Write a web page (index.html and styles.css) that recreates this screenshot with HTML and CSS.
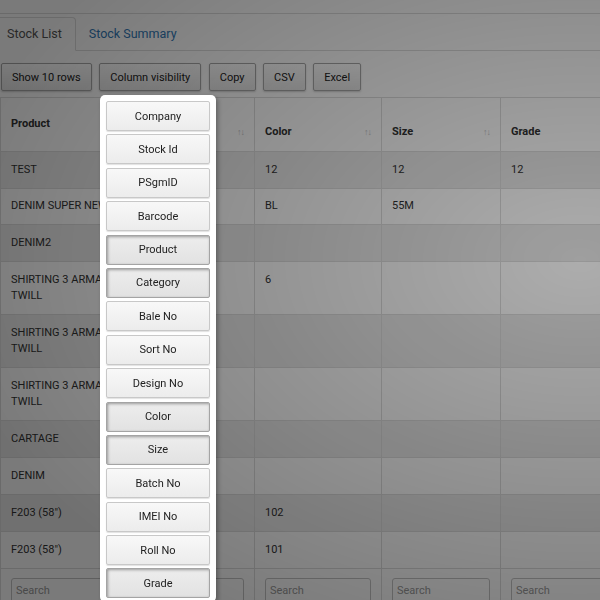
FILE: index.html
```html
<!DOCTYPE html>
<html>
<head>
<meta charset="utf-8">
<link rel="stylesheet" href="styles.css">
</head>
<body>
<div class="topbar"></div>
<ul class="tabs">
  <li class="tab active">Stock List</li>
  <li class="tab"><a class="tab-link" href="#">Stock Summary</a></li>
</ul>
<div class="toolbar">
  <button class="dt-btn">Show 10 rows</button>
  <button class="dt-btn">Column visibility</button>
  <button class="dt-btn">Copy</button>
  <button class="dt-btn">CSV</button>
  <button class="dt-btn">Excel</button>
</div>
<table class="grid">
  <colgroup>
    <col class="c-product"><col class="c-category"><col class="c-color"><col class="c-size"><col class="c-grade">
  </colgroup>
  <thead>
    <tr>
      <th class="th-product">Product</th>
      <th><div class="th-inner"><span>Category</span><span class="sort">↑↓</span></div></th>
      <th><div class="th-inner"><span>Color</span><span class="sort">↑↓</span></div></th>
      <th><div class="th-inner"><span>Size</span><span class="sort">↑↓</span></div></th>
      <th><div class="th-inner"><span>Grade</span></div></th>
    </tr>
  </thead>
  <tbody>
    <tr class="odd"><td>TEST</td><td>TEST</td><td>12</td><td>12</td><td>12</td></tr>
    <tr><td>DENIM SUPER NEW</td><td></td><td>BL</td><td>55M</td><td></td></tr>
    <tr class="odd"><td>DENIM2</td><td></td><td></td><td></td><td></td></tr>
    <tr><td>SHIRTING 3 ARMANI TWILL</td><td></td><td>6</td><td></td><td></td></tr>
    <tr class="odd"><td>SHIRTING 3 ARMANI TWILL</td><td></td><td></td><td></td><td></td></tr>
    <tr><td>SHIRTING 3 ARMANI TWILL</td><td></td><td></td><td></td><td></td></tr>
    <tr class="odd"><td>CARTAGE</td><td></td><td></td><td></td><td></td></tr>
    <tr><td>DENIM</td><td></td><td></td><td></td><td></td></tr>
    <tr class="odd"><td>F203 (58")</td><td></td><td>102</td><td></td><td></td></tr>
    <tr><td>F203 (58")</td><td></td><td>101</td><td></td><td></td></tr>
  </tbody>
  <tfoot>
    <tr>
      <td><input class="search" placeholder="Search"></td>
      <td><input class="search" placeholder="Search"></td>
      <td><input class="search" placeholder="Search"></td>
      <td><input class="search" placeholder="Search"></td>
      <td><input class="search" placeholder="Search"></td>
    </tr>
  </tfoot>
</table>
<div class="backdrop"></div>
<div class="collection">
  <button class="col-btn">Company</button>
  <button class="col-btn">Stock Id</button>
  <button class="col-btn">PSgmID</button>
  <button class="col-btn">Barcode</button>
  <button class="col-btn active">Product</button>
  <button class="col-btn active">Category</button>
  <button class="col-btn">Bale No</button>
  <button class="col-btn">Sort No</button>
  <button class="col-btn">Design No</button>
  <button class="col-btn active">Color</button>
  <button class="col-btn active">Size</button>
  <button class="col-btn">Batch No</button>
  <button class="col-btn">IMEI No</button>
  <button class="col-btn">Roll No</button>
  <button class="col-btn active">Grade</button>
</div>
</body>
</html>
```
FILE: styles.css
```css
html, body {
  margin: 0;
  padding: 0;
}
body {
  width: 600px;
  height: 600px;
  overflow: hidden;
  background: #fff;
  font-family: Roboto, "Liberation Sans", Arial, sans-serif;
  font-size: 11px;
  color: #333;
}
.topbar {
  height: 13px;
  border-bottom: 1px solid #ddd;
  background: #fff;
}
.tabs {
  display: flex;
  list-style: none;
  margin: 3px 0 0;
  padding: 0;
  height: 33px;
  border-bottom: 1px solid #ddd;
}
.tab {
  padding: 0 12px;
  line-height: 32px;
  font-size: 12.5px;
  border: 1px solid transparent;
}
.tab.active {
  margin-left: -7px;
  padding: 0 13px;
  border: 1px solid #ddd;
  border-bottom-color: transparent;
  border-radius: 4px 4px 0 0;
  background: #fff;
  color: #555;
  box-sizing: border-box;
  margin-bottom: -1px;
  height: 34px;
}
.tab-link {
  color: #337ab7;
  text-decoration: none;
}
.toolbar {
  display: flex;
  gap: 7.5px;
  margin-top: 12px;
  padding-left: 1px;
}
.dt-btn {
  height: 28px;
  padding: 0 10px;
  font-family: inherit;
  font-size: 11px;
  color: #222;
  border: 1px solid #a8a8a8;
  border-radius: 2px;
  background: linear-gradient(#ffffff, #e6e6e6);
  box-shadow: 0 1px 2px rgba(0, 0, 0, 0.2);
}
.grid {
  margin-top: 5.5px;
  border-collapse: collapse;
  table-layout: fixed;
  width: 640px;
  border: 1px solid #ddd;
}
.c-product { width: 140px; }
.c-category { width: 114px; }
.c-color { width: 127px; }
.c-size { width: 119px; }
.c-grade { width: 140px; }
.grid th, .grid td {
  border: 1px solid #ddd;
  padding: 9.75px 10px;
  line-height: 16.3px;
  text-align: left;
  vertical-align: top;
}
.grid th {
  font-weight: bold;
  color: #333;
  height: 33px;
  padding-bottom: 10.5px;
  vertical-align: bottom;
}
.grid th.th-product {
  vertical-align: middle;
}
.th-inner {
  display: flex;
  justify-content: space-between;
  align-items: flex-end;
}
.sort {
  font-weight: normal;
  color: #c4c4c4;
  font-size: 9px;
  letter-spacing: -1px;
}
.grid tbody td:first-child {
  vertical-align: middle;
}
.grid tr.odd td {
  background: #ebebeb;
}
.grid tfoot td {
  padding: 9px 10px;
}
.search {
  width: 100%;
  box-sizing: border-box;
  height: 26px;
  padding: 0 4px;
  font-family: inherit;
  font-size: 11px;
  border: 1px solid #c4c4c4;
  border-radius: 3px;
  background: #fff;
}
.search::placeholder {
  color: #9a9a9a;
}
.backdrop {
  position: fixed;
  inset: 0;
  background: radial-gradient(ellipse 640px 420px at 580px 260px, rgba(0, 0, 0, 0.32) 0%, rgba(0, 0, 0, 0.52) 100%);
}
.collection {
  position: fixed;
  left: 100px;
  top: 95px;
  width: 116px;
  box-sizing: border-box;
  padding: 6px 6px 4px;
  background: #fff;
  border-radius: 5px;
  box-shadow: 2px 2px 5px rgba(0, 0, 0, 0.3);
  display: flex;
  flex-direction: column;
  gap: 3.4px;
}
.col-btn {
  height: 30px;
  width: 100%;
  font-family: inherit;
  font-size: 11px;
  color: #222;
  border: 1px solid #c8c8c8;
  border-radius: 2px;
  background: linear-gradient(#f8f8f8, #ececec);
  box-shadow: 0 1px 1px rgba(0, 0, 0, 0.12);
}
.col-btn.active {
  border-color: #a4a4a4;
  background: linear-gradient(#ededed, #e2e2e2);
  box-shadow: inset 1px 1px 3px #9a9a9a;
}
```
